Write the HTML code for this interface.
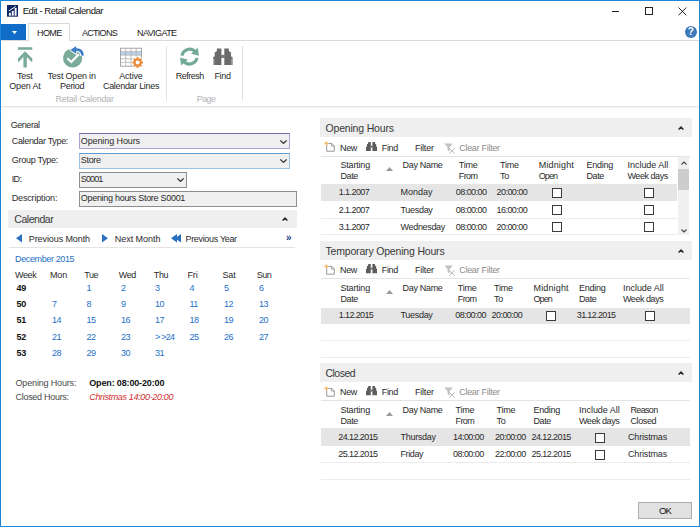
<!DOCTYPE html>
<html>
<head>
<meta charset="utf-8">
<title>Edit - Retail Calendar</title>
<style>
html,body{margin:0;padding:0;}
body{width:700px;height:527px;overflow:hidden;background:#fff;font-family:"Liberation Sans",sans-serif;font-size:9px;color:#1e1e1e;position:relative;}
#win{position:absolute;left:0;top:0;width:698px;height:525px;border:1px solid #1c86d9;background:#fff;}
.a{position:absolute;white-space:nowrap;}
.t{position:absolute;white-space:nowrap;line-height:12px;font-size:9px;letter-spacing:-0.3px;color:#2a2a2a;}
.c{text-align:center;}
.hl{position:absolute;height:1px;background:#ebebeb;}
.vl{position:absolute;width:1px;background:#e1e1e1;}
.sec{position:absolute;background:#efefef;}
.blue{color:#2470c6;}
.b{font-weight:bold;}
.cb{position:absolute;width:8px;height:8px;border:1px solid #3a3a3a;background:#fff;}
</style>
</head>
<body>
<div id="win">
<svg class="a" style="left:5.7px;top:4px" width="11.5" height="11.7" viewBox="0 0 12 12" preserveAspectRatio="none"><rect width="12" height="12" fill="#0d2560"/><rect x="2" y="8" width="2" height="3" fill="#fff"/><rect x="5" y="6" width="2" height="5" fill="#fff"/><rect x="8" y="3" width="2" height="8" fill="#fff"/><path d="M2 6 L9 1.5" stroke="#fff" stroke-width="1" fill="none"/></svg>
<div class="t " style="left:21.70px;top:4.3px;font-size:9.5px;letter-spacing:-0.45px;color:#111">Edit - Retail Calendar</div>
<div class="a" style="left:610.7px;top:10px;width:7.3px;height:1px;background:#222"></div>
<div class="a" style="left:643.7px;top:6px;width:6px;height:6px;border:1px solid #222"></div>
<svg class="a" style="left:676.7px;top:6px" width="9" height="9" viewBox="0 0 9 9"><path d="M0.5 0.5 L8.3 8.3 M8.3 0.5 L0.5 8.3" stroke="#222" stroke-width="1"/></svg>
<div class="a" style="left:0px;top:23px;width:25px;height:16px;background:#106cc6"></div>
<svg class="a" style="left:11px;top:30px" width="5" height="3.5" viewBox="0 0 5 3.5"><path d="M0 0 H5 L2.5 3.3 Z" fill="#fff"/></svg>
<div class="hl" style="left:0px;top:39px;width:698px;background:#dadada"></div>
<div class="a" style="left:27px;top:22px;width:40px;height:17px;border:1px solid #dadada;border-bottom:1px solid #fff;background:#fff"></div>
<div class="t " style="left:36.00px;top:26px;letter-spacing:-0.62px;color:#222">HOME</div>
<div class="t " style="left:81.00px;top:26px;letter-spacing:-0.72px;color:#222">ACTIONS</div>
<div class="t " style="left:136.00px;top:26px;letter-spacing:-0.59px;color:#222">NAVIGATE</div>
<div class="a" style="left:683.8px;top:25px;width:12px;height:12px;border-radius:6px;background:#3b79b9;color:#fff;font-weight:bold;font-size:10px;line-height:12px;text-align:center">?</div>
<div class="hl" style="left:0px;top:105px;width:698px;background:#e6e6e6"></div>
<div class="hl" style="left:0px;top:106px;width:698px;background:#f4f4f4"></div>
<div class="vl" style="left:165px;top:45px;height:55px;"></div>
<div class="vl" style="left:241px;top:45px;height:55px;"></div>
<div class="t " style="left:16.00px;top:69px;letter-spacing:-0.25px;">Test</div>
<div class="t " style="left:8.25px;top:79px;letter-spacing:-0.15px;">Open At</div>
<div class="t " style="left:46.47px;top:69px;letter-spacing:-0.19px;">Test Open in</div>
<div class="t " style="left:58.97px;top:79px;letter-spacing:-0.29px;">Period</div>
<div class="t " style="left:118.28px;top:69px;letter-spacing:-0.21px;">Active</div>
<div class="t " style="left:102.00px;top:79px;letter-spacing:-0.32px;">Calendar Lines</div>
<div class="t " style="left:54.47px;top:92px;letter-spacing:-0.25px;color:#b4b4b4">Retail Calendar</div>
<div class="t " style="left:174.75px;top:69px;letter-spacing:-0.50px;">Refresh</div>
<div class="t " style="left:213.38px;top:69px;letter-spacing:-0.32px;">Find</div>
<div class="t " style="left:195.72px;top:92px;letter-spacing:-0.57px;color:#b4b4b4">Page</div>
<svg class="a" style="left:16px;top:45px" width="18" height="24" viewBox="16 45 18 24"><g transform="translate(-1,-1)"><rect x="18" y="47.2" width="14.3" height="2.6" fill="#7aab98"/><path d="M25.1 51.2 L32.3 58.6 V62.6 L26.8 57 V67.4 H23.4 V57 L18 62.6 V58.6 Z" fill="#7aab98"/></g></svg>
<svg class="a" style="left:60px;top:43px" width="26" height="26" viewBox="60 43 26 26"><g transform="translate(-1,-1)"><circle cx="72.6" cy="58" r="9.6" fill="#7aab98"/><path d="M67.3 58.2 L71.3 62 L78.9 54.2" stroke="#fff" stroke-width="2.2" fill="none"/><g transform="translate(-0.8,0.8)"><path d="M83.3 55.2 C83.6 50.6 80.6 48.3 76.4 48.9" stroke="#fff" stroke-width="5" fill="none"/><path d="M70 49.2 L77.6 43.6 V54.6 Z" fill="#fff"/><path d="M83.3 54.8 C83.6 50.6 80.6 48.3 76.4 48.9" stroke="#3f7fc6" stroke-width="2.7" fill="none"/><path d="M71.3 49.2 L76.9 45.3 V53 Z" fill="#3f7fc6"/></g></g></svg>
<svg class="a" style="left:118px;top:45px" width="28" height="24" viewBox="118 45 28 24"><g transform="translate(-1,-1)"><rect x="120.5" y="48.2" width="21" height="18" fill="#fff" stroke="#9a9a9a" stroke-width="0.9"/><rect x="121" y="51.8" width="20" height="3.2" fill="#bcd3ee"/><path d="M120.5 51.6 H141.5" stroke="#a8a8a8" stroke-width="0.7"/><path d="M120.5 55.2 H141.5" stroke="#a8a8a8" stroke-width="0.7"/><path d="M120.5 58.8 H141.5" stroke="#a8a8a8" stroke-width="0.7"/><path d="M120.5 62.4 H141.5" stroke="#a8a8a8" stroke-width="0.7"/><path d="M125.7 48.2 V66.2" stroke="#a8a8a8" stroke-width="0.7"/><path d="M131 48.2 V66.2" stroke="#a8a8a8" stroke-width="0.7"/><path d="M136.2 48.2 V66.2" stroke="#a8a8a8" stroke-width="0.7"/><circle cx="137.6" cy="62.5" r="6.1" fill="#fff"/><circle cx="137.6" cy="62.5" r="3.1" fill="none" stroke="#e98a3a" stroke-width="2.2"/><path d="M141.40 62.50 L143.00 62.50" stroke="#e98a3a" stroke-width="2.1"/><path d="M140.29 65.19 L141.42 66.32" stroke="#e98a3a" stroke-width="2.1"/><path d="M137.60 66.30 L137.60 67.90" stroke="#e98a3a" stroke-width="2.1"/><path d="M134.91 65.19 L133.78 66.32" stroke="#e98a3a" stroke-width="2.1"/><path d="M133.80 62.50 L132.20 62.50" stroke="#e98a3a" stroke-width="2.1"/><path d="M134.91 59.81 L133.78 58.68" stroke="#e98a3a" stroke-width="2.1"/><path d="M137.60 58.70 L137.60 57.10" stroke="#e98a3a" stroke-width="2.1"/><path d="M140.29 59.81 L141.42 58.68" stroke="#e98a3a" stroke-width="2.1"/></g></svg>
<svg class="a" style="left:177px;top:44px" width="26" height="26" viewBox="177 44 26 26"><g transform="translate(-1,-1)" fill="none" stroke="#74ab96" stroke-width="3.1"><path d="M182.1 57.2 A7.4 7.4 0 0 1 195.4 52.2"/><path d="M196.9 56.0 A7.4 7.4 0 0 1 183.6 61.0"/></g><g transform="translate(-1,-1)"><rect x="178" y="55.7" width="24" height="2.1" fill="#fff"/><path d="M197.9 47.7 L198.9 55.7 L191.1 53.7 Z" fill="#74ab96"/><path d="M181.1 65.6 L180.1 57.8 L187.9 59.6 Z" fill="#74ab96"/></g></svg>
<svg class="a" style="left:211px;top:46px" width="24" height="20" viewBox="211 46 24 20"><g transform="translate(-1,-1)" fill="#6b6b6b"><path d="M216.9 48.4 L221.4 48.4 L221.4 64.9 L213.0 64.9 L213.0 57.4 L214.7 56.2 L214.7 52.6 L216.3 51.4 L216.9 50.5 Z"/><path d="M228.8 48.4 L224.3 48.4 L224.3 64.9 L232.7 64.9 L232.7 57.4 L231.0 56.2 L231.0 52.6 L229.4 51.4 L228.8 50.5 Z"/><rect x="221" y="54.8" width="4" height="3.2" fill="#7c7c7c"/><rect x="213" y="58.5" width="1.3" height="6.4" fill="#b4b4b4"/><rect x="231.4" y="58.5" width="1.3" height="6.4" fill="#b4b4b4"/></g></svg>
<div class="t " style="left:9.75px;top:118px;letter-spacing:-0.47px;">General</div>
<div class="t " style="left:10.75px;top:134px;letter-spacing:-0.33px;">Calendar Type:</div>
<div class="t " style="left:10.75px;top:153px;letter-spacing:-0.28px;">Group Type:</div>
<div class="t " style="left:10.75px;top:172px;letter-spacing:-0.67px;">ID:</div>
<div class="t " style="left:10.75px;top:191px;letter-spacing:-0.17px;">Description:</div>
<div class="a" style="left:77.5px;top:132px;width:209px;height:14px;border:1px solid #a9a3d6;border-top-color:#6f6aa8;background:#f0f0f0"></div>
<div class="a" style="left:77.5px;top:152px;width:209px;height:14px;border:1px solid #9cc3e6;border-top-color:#5b9fd6;background:#f0f0f0"></div>
<div class="a" style="left:77.5px;top:171px;width:106px;height:14px;border:1px solid #8e8e8e;background:#f0f0f0"></div>
<div class="a" style="left:77.5px;top:190px;width:216px;height:14px;border:1px solid #8e8e8e;background:#f0f0f0"></div>
<div class="t " style="left:79.75px;top:134px;letter-spacing:-0.10px;">Opening Hours</div>
<div class="t " style="left:79.75px;top:153px;letter-spacing:-0.30px;">Store</div>
<div class="t " style="left:79.75px;top:172px;letter-spacing:-0.86px;">S0001</div>
<div class="t " style="left:79.75px;top:191px;letter-spacing:-0.29px;">Opening hours Store S0001</div>
<svg class="a" style="left:278.5px;top:138.5px" width="7" height="4" viewBox="0 0 7 4"><path d="M0.4 0.4 L3.5 3.4 L6.6 0.4" stroke="#3a3a3a" stroke-width="1.25" fill="none"/></svg>
<svg class="a" style="left:278.5px;top:157.7px" width="7" height="4" viewBox="0 0 7 4"><path d="M0.4 0.4 L3.5 3.4 L6.6 0.4" stroke="#3a3a3a" stroke-width="1.25" fill="none"/></svg>
<svg class="a" style="left:175.5px;top:176.5px" width="7" height="4" viewBox="0 0 7 4"><path d="M0.4 0.4 L3.5 3.4 L6.6 0.4" stroke="#3a3a3a" stroke-width="1.25" fill="none"/></svg>
<div class="sec" style="left:7.25px;top:209px;width:288.5px;height:18px"></div>
<div class="t " style="left:13.25px;top:212px;font-size:10.5px;letter-spacing:-0.45px;color:#383838">Calendar</div>
<svg class="a" style="left:281.25px;top:216px" width="6" height="4" viewBox="0 0 6 4"><path d="M0.6 3.6 L3 1.1 L5.4 3.6" stroke="#2a2a2a" stroke-width="1.4" fill="none"/></svg>
<div class="sec" style="left:318.5px;top:117px;width:372.5px;height:19px"></div>
<div class="t " style="left:324.50px;top:120.5px;font-size:10.5px;letter-spacing:-0.18px;color:#383838">Opening Hours</div>
<svg class="a" style="left:676.5px;top:124.5px" width="6" height="4" viewBox="0 0 6 4"><path d="M0.6 3.6 L3 1.1 L5.4 3.6" stroke="#2a2a2a" stroke-width="1.4" fill="none"/></svg>
<div class="sec" style="left:318.5px;top:240px;width:372.5px;height:19px"></div>
<div class="t " style="left:324.50px;top:243.5px;font-size:10.5px;letter-spacing:-0.18px;color:#383838">Temporary Opening Hours</div>
<svg class="a" style="left:676.5px;top:247.5px" width="6" height="4" viewBox="0 0 6 4"><path d="M0.6 3.6 L3 1.1 L5.4 3.6" stroke="#2a2a2a" stroke-width="1.4" fill="none"/></svg>
<div class="sec" style="left:318.5px;top:362px;width:372.5px;height:19px"></div>
<div class="t " style="left:324.50px;top:365.5px;font-size:10.5px;letter-spacing:-0.53px;color:#383838">Closed</div>
<svg class="a" style="left:676.5px;top:369.5px" width="6" height="4" viewBox="0 0 6 4"><path d="M0.6 3.6 L3 1.1 L5.4 3.6" stroke="#2a2a2a" stroke-width="1.4" fill="none"/></svg>
<svg class="a" style="left:15px;top:233.25px" width="6" height="8.5" viewBox="0 0 6 8.5"><path d="M6 0 L0 4.25 L6 8.5 Z" fill="#2a6fc0"/></svg>
<div class="t " style="left:27.75px;top:231.75px;letter-spacing:-0.09px;">Previous Month</div>
<svg class="a" style="left:101px;top:233.25px" width="6" height="8.5" viewBox="0 0 6 8.5"><path d="M0 0 L6 4.25 L0 8.5 Z" fill="#2a6fc0"/></svg>
<div class="t " style="left:113.75px;top:231.75px;letter-spacing:-0.03px;">Next Month</div>
<svg class="a" style="left:170px;top:233.25px" width="6" height="8.5" viewBox="0 0 6 8.5"><path d="M6 0 L0 4.25 L6 8.5 Z" fill="#2a6fc0"/></svg>
<svg class="a" style="left:174px;top:233.25px" width="6" height="8.5" viewBox="0 0 6 8.5"><path d="M6 0 L0 4.25 L6 8.5 Z" fill="#2a6fc0"/></svg>
<div class="t " style="left:184.50px;top:231.75px;letter-spacing:-0.33px;">Previous Year</div>
<div class="t " style="left:285.00px;top:231px;color:#1c3f8c;font-weight:bold;font-size:10px;letter-spacing:0">&raquo;</div>
<div class="hl" style="left:8px;top:246px;width:286px;background:#e4e4e4"></div>
<div class="t blue" style="left:14.00px;top:251.75px;letter-spacing:-0.37px;">December 2015</div>
<div class="t " style="left:14.00px;top:268px;letter-spacing:-0.40px;">Week</div>
<div class="t " style="left:49.00px;top:268px;letter-spacing:-0.17px;">Mon</div>
<div class="t " style="left:83.25px;top:268px;letter-spacing:-0.40px;">Tue</div>
<div class="t " style="left:117.75px;top:268px;letter-spacing:-0.45px;">Wed</div>
<div class="t " style="left:152.75px;top:268px;letter-spacing:-0.34px;">Thu</div>
<div class="t " style="left:186.50px;top:268px;letter-spacing:-0.17px;">Fri</div>
<div class="t " style="left:221.50px;top:268px;letter-spacing:-0.17px;">Sat</div>
<div class="t " style="left:255.75px;top:268px;letter-spacing:-0.51px;">Sun</div>
<div class="t b" style="left:15.50px;top:280.75px;color:#111;letter-spacing:-0.2px">49</div>
<div class="t blue" style="left:85.50px;top:280.75px;letter-spacing:-0.6px">1</div>
<div class="t blue" style="left:120.00px;top:280.75px;letter-spacing:-0.6px">2</div>
<div class="t blue" style="left:154.00px;top:280.75px;letter-spacing:-0.6px">3</div>
<div class="t blue" style="left:188.50px;top:280.75px;letter-spacing:-0.6px">4</div>
<div class="t blue" style="left:223.00px;top:280.75px;letter-spacing:-0.6px">5</div>
<div class="t blue" style="left:258.00px;top:280.75px;letter-spacing:-0.6px">6</div>
<div class="t b" style="left:15.50px;top:297px;color:#111;letter-spacing:-0.2px">50</div>
<div class="t blue" style="left:51.00px;top:297px;letter-spacing:-0.6px">7</div>
<div class="t blue" style="left:85.50px;top:297px;letter-spacing:-0.6px">8</div>
<div class="t blue" style="left:120.00px;top:297px;letter-spacing:-0.6px">9</div>
<div class="t blue" style="left:154.00px;top:297px;letter-spacing:-0.6px">10</div>
<div class="t blue" style="left:188.50px;top:297px;letter-spacing:-0.6px">11</div>
<div class="t blue" style="left:223.00px;top:297px;letter-spacing:-0.6px">12</div>
<div class="t blue" style="left:258.00px;top:297px;letter-spacing:-0.6px">13</div>
<div class="t b" style="left:15.50px;top:313.25px;color:#111;letter-spacing:-0.2px">51</div>
<div class="t blue" style="left:51.00px;top:313.25px;letter-spacing:-0.6px">14</div>
<div class="t blue" style="left:85.50px;top:313.25px;letter-spacing:-0.6px">15</div>
<div class="t blue" style="left:120.00px;top:313.25px;letter-spacing:-0.6px">16</div>
<div class="t blue" style="left:154.00px;top:313.25px;letter-spacing:-0.6px">17</div>
<div class="t blue" style="left:188.50px;top:313.25px;letter-spacing:-0.6px">18</div>
<div class="t blue" style="left:223.00px;top:313.25px;letter-spacing:-0.6px">19</div>
<div class="t blue" style="left:258.00px;top:313.25px;letter-spacing:-0.6px">20</div>
<div class="t b" style="left:15.50px;top:329.5px;color:#111;letter-spacing:-0.2px">52</div>
<div class="t blue" style="left:51.00px;top:329.5px;letter-spacing:-0.6px">21</div>
<div class="t blue" style="left:85.50px;top:329.5px;letter-spacing:-0.6px">22</div>
<div class="t blue" style="left:120.00px;top:329.5px;letter-spacing:-0.6px">23</div>
<div class="t blue" style="left:154.00px;top:329.5px;letter-spacing:-0.75px">&gt; &gt;24</div>
<div class="t blue" style="left:188.50px;top:329.5px;letter-spacing:-0.6px">25</div>
<div class="t blue" style="left:223.00px;top:329.5px;letter-spacing:-0.6px">26</div>
<div class="t blue" style="left:258.00px;top:329.5px;letter-spacing:-0.6px">27</div>
<div class="t b" style="left:15.50px;top:345.75px;color:#111;letter-spacing:-0.2px">53</div>
<div class="t blue" style="left:51.00px;top:345.75px;letter-spacing:-0.6px">28</div>
<div class="t blue" style="left:85.50px;top:345.75px;letter-spacing:-0.6px">29</div>
<div class="t blue" style="left:120.00px;top:345.75px;letter-spacing:-0.6px">30</div>
<div class="t blue" style="left:154.00px;top:345.75px;letter-spacing:-0.6px">31</div>
<div class="t " style="left:14.50px;top:376px;letter-spacing:-0.16px;color:#4a4a4a">Opening Hours:</div>
<div class="t b" style="left:88.25px;top:376px;letter-spacing:-0.15px;color:#111">Open: 08:00-20:00</div>
<div class="t " style="left:14.50px;top:389.75px;letter-spacing:-0.29px;color:#4a4a4a">Closed Hours:</div>
<div class="t " style="left:88.25px;top:389.75px;letter-spacing:-0.34px;color:#d03030;font-style:italic">Christmas 14:00-20:00</div>
<svg class="a" style="left:323px;top:140px" width="12" height="12" viewBox="0 0 12 12"><path d="M2.7 2.4 H7.8 L10.3 4.9 V10.2 H2.7 Z" fill="#fff" stroke="#8c8c8c" stroke-width="0.9"/><path d="M7.6 2.6 V5.1 H10.1" fill="none" stroke="#8c8c8c" stroke-width="0.8"/><path d="M2.4 0.2 L3.1 1.8 L4.7 2.4 L3.1 3.1 L2.4 4.7 L1.7 3.1 L0.1 2.4 L1.7 1.8 Z" fill="#f1b95c" stroke="#f3c67a" stroke-width="0.6"/></svg>
<div class="t " style="left:339.00px;top:140.5px;letter-spacing:-0.34px;">New</div>
<svg class="a" style="left:365px;top:140.9px" width="11.2" height="9.3" viewBox="213 48.4 19.7 16.5" preserveAspectRatio="none"><g fill="#5c5c5c"><path d="M216.9 48.4 L221.4 48.4 L221.4 64.9 L213.0 64.9 L213.0 57.4 L214.7 56.2 L214.7 52.6 L216.3 51.4 L216.9 50.5 Z"/><path d="M228.8 48.4 L224.3 48.4 L224.3 64.9 L232.7 64.9 L232.7 57.4 L231.0 56.2 L231.0 52.6 L229.4 51.4 L228.8 50.5 Z"/><rect x="221" y="54.8" width="4" height="3.6" fill="#6c6c6c"/></g></svg>
<div class="t " style="left:380.75px;top:140.5px;letter-spacing:-0.32px;">Find</div>
<div class="t " style="left:414.00px;top:140.5px;letter-spacing:-0.21px;">Filter</div>
<svg class="a" style="left:443px;top:140.5px" width="12" height="12" viewBox="0 0 12 12"><path d="M0.3 1.6 H8.8 L5.6 5.2 V9.4 L3.6 8.2 V5.2 Z" fill="#c2c2c2"/><path d="M5.2 6.4 L10.6 11.6 M10.6 6.4 L5.2 11.6" stroke="#b8b8b8" stroke-width="1"/></svg>
<div class="t " style="left:458.20px;top:140.5px;letter-spacing:-0.28px;color:#8c8c8c">Clear Filter</div>
<svg class="a" style="left:323px;top:262.5px" width="12" height="12" viewBox="0 0 12 12"><path d="M2.7 2.4 H7.8 L10.3 4.9 V10.2 H2.7 Z" fill="#fff" stroke="#8c8c8c" stroke-width="0.9"/><path d="M7.6 2.6 V5.1 H10.1" fill="none" stroke="#8c8c8c" stroke-width="0.8"/><path d="M2.4 0.2 L3.1 1.8 L4.7 2.4 L3.1 3.1 L2.4 4.7 L1.7 3.1 L0.1 2.4 L1.7 1.8 Z" fill="#f1b95c" stroke="#f3c67a" stroke-width="0.6"/></svg>
<div class="t " style="left:339.00px;top:263px;letter-spacing:-0.34px;">New</div>
<svg class="a" style="left:365px;top:263.4px" width="11.2" height="9.3" viewBox="213 48.4 19.7 16.5" preserveAspectRatio="none"><g fill="#5c5c5c"><path d="M216.9 48.4 L221.4 48.4 L221.4 64.9 L213.0 64.9 L213.0 57.4 L214.7 56.2 L214.7 52.6 L216.3 51.4 L216.9 50.5 Z"/><path d="M228.8 48.4 L224.3 48.4 L224.3 64.9 L232.7 64.9 L232.7 57.4 L231.0 56.2 L231.0 52.6 L229.4 51.4 L228.8 50.5 Z"/><rect x="221" y="54.8" width="4" height="3.6" fill="#6c6c6c"/></g></svg>
<div class="t " style="left:380.75px;top:263px;letter-spacing:-0.32px;">Find</div>
<div class="t " style="left:414.00px;top:263px;letter-spacing:-0.21px;">Filter</div>
<svg class="a" style="left:443px;top:263px" width="12" height="12" viewBox="0 0 12 12"><path d="M0.3 1.6 H8.8 L5.6 5.2 V9.4 L3.6 8.2 V5.2 Z" fill="#c2c2c2"/><path d="M5.2 6.4 L10.6 11.6 M10.6 6.4 L5.2 11.6" stroke="#b8b8b8" stroke-width="1"/></svg>
<div class="t " style="left:458.20px;top:263px;letter-spacing:-0.28px;color:#8c8c8c">Clear Filter</div>
<svg class="a" style="left:323px;top:384.5px" width="12" height="12" viewBox="0 0 12 12"><path d="M2.7 2.4 H7.8 L10.3 4.9 V10.2 H2.7 Z" fill="#fff" stroke="#8c8c8c" stroke-width="0.9"/><path d="M7.6 2.6 V5.1 H10.1" fill="none" stroke="#8c8c8c" stroke-width="0.8"/><path d="M2.4 0.2 L3.1 1.8 L4.7 2.4 L3.1 3.1 L2.4 4.7 L1.7 3.1 L0.1 2.4 L1.7 1.8 Z" fill="#f1b95c" stroke="#f3c67a" stroke-width="0.6"/></svg>
<div class="t " style="left:339.00px;top:385px;letter-spacing:-0.34px;">New</div>
<svg class="a" style="left:365px;top:385.4px" width="11.2" height="9.3" viewBox="213 48.4 19.7 16.5" preserveAspectRatio="none"><g fill="#5c5c5c"><path d="M216.9 48.4 L221.4 48.4 L221.4 64.9 L213.0 64.9 L213.0 57.4 L214.7 56.2 L214.7 52.6 L216.3 51.4 L216.9 50.5 Z"/><path d="M228.8 48.4 L224.3 48.4 L224.3 64.9 L232.7 64.9 L232.7 57.4 L231.0 56.2 L231.0 52.6 L229.4 51.4 L228.8 50.5 Z"/><rect x="221" y="54.8" width="4" height="3.6" fill="#6c6c6c"/></g></svg>
<div class="t " style="left:380.75px;top:385px;letter-spacing:-0.32px;">Find</div>
<div class="t " style="left:414.00px;top:385px;letter-spacing:-0.21px;">Filter</div>
<svg class="a" style="left:443px;top:385px" width="12" height="12" viewBox="0 0 12 12"><path d="M0.3 1.6 H8.8 L5.6 5.2 V9.4 L3.6 8.2 V5.2 Z" fill="#c2c2c2"/><path d="M5.2 6.4 L10.6 11.6 M10.6 6.4 L5.2 11.6" stroke="#b8b8b8" stroke-width="1"/></svg>
<div class="t " style="left:458.20px;top:385px;letter-spacing:-0.28px;color:#8c8c8c">Clear Filter</div>
<div class="hl" style="left:319.5px;top:155px;width:369px;background:#e4e4e4"></div>
<div class="t " style="left:339.50px;top:158px;letter-spacing:-0.19px;">Starting</div>
<div class="t " style="left:339.50px;top:169.25px;letter-spacing:-0.38px;">Date</div>
<div class="t " style="left:401.50px;top:158px;letter-spacing:-0.31px;">Day Name</div>
<div class="t " style="left:457.75px;top:158px;letter-spacing:-0.23px;">Time</div>
<div class="t " style="left:457.75px;top:169.25px;letter-spacing:-0.56px;">From</div>
<div class="t " style="left:499.00px;top:158px;letter-spacing:-0.23px;">Time</div>
<div class="t " style="left:499.00px;top:169.25px;">To</div>
<div class="t " style="left:537.75px;top:158px;letter-spacing:0.15px;">Midnight</div>
<div class="t " style="left:537.75px;top:169.25px;letter-spacing:-0.90px;">Open</div>
<div class="t " style="left:585.50px;top:158px;letter-spacing:-0.26px;">Ending</div>
<div class="t " style="left:585.50px;top:169.25px;letter-spacing:-0.38px;">Date</div>
<div class="t " style="left:626.50px;top:158px;letter-spacing:-0.03px;">Include All</div>
<div class="t " style="left:626.50px;top:169.25px;letter-spacing:-0.46px;">Week days</div>
<svg class="a" style="left:384.75px;top:166.4px" width="7" height="4" viewBox="0 0 7 4"><path d="M0 4 L3.5 0 L7 4 Z" fill="#9a9a9a"/></svg>
<div class="a" style="left:319.5px;top:183px;width:356.5px;height:16.5px;background:#e5e5e5"></div>
<div class="hl" style="left:319.5px;top:217px;width:356.5px;"></div>
<div class="hl" style="left:319.5px;top:233px;width:356.5px;"></div>
<div class="t " style="left:337.75px;top:185px;letter-spacing:-0.57px;">1.1.2007</div>
<div class="t " style="left:399.50px;top:185px;letter-spacing:-0.01px;">Monday</div>
<div class="t " style="left:454.75px;top:185px;letter-spacing:-0.54px;">08:00:00</div>
<div class="t " style="left:495.50px;top:185px;letter-spacing:-0.54px;">20:00:00</div>
<div class="t " style="left:337.75px;top:202.5px;letter-spacing:-0.57px;">2.1.2007</div>
<div class="t " style="left:399.50px;top:202.5px;letter-spacing:-0.31px;">Tuesday</div>
<div class="t " style="left:454.75px;top:202.5px;letter-spacing:-0.54px;">08:00:00</div>
<div class="t " style="left:495.50px;top:202.5px;letter-spacing:-0.54px;">16:00:00</div>
<div class="t " style="left:337.75px;top:219.5px;letter-spacing:-0.57px;">3.1.2007</div>
<div class="t " style="left:399.50px;top:219.5px;letter-spacing:-0.32px;">Wednesday</div>
<div class="t " style="left:454.75px;top:219.5px;letter-spacing:-0.54px;">08:00:00</div>
<div class="t " style="left:495.50px;top:219.5px;letter-spacing:-0.54px;">20:00:00</div>
<div class="cb" style="left:551px;top:187px"></div>
<div class="cb" style="left:643.25px;top:187px"></div>
<div class="cb" style="left:551px;top:203.75px"></div>
<div class="cb" style="left:643.25px;top:203.75px"></div>
<div class="cb" style="left:551px;top:221.25px"></div>
<div class="cb" style="left:643.25px;top:221.25px"></div>
<div class="a" style="left:677px;top:156px;width:11px;height:77.5px;background:#f0f0f0"></div>
<div class="a" style="left:677px;top:168.25px;width:11px;height:20.25px;background:#cdcdcd"></div>
<svg class="a" style="left:679.5px;top:160px" width="6" height="4" viewBox="0 0 6 4"><path d="M0.5 3.5 L3 1 L5.5 3.5" stroke="#444" stroke-width="1.1" fill="none"/></svg>
<svg class="a" style="left:679.5px;top:227.5px" width="6" height="4" viewBox="0 0 6 4"><path d="M0.5 0.5 L3 3 L5.5 0.5" stroke="#444" stroke-width="1.1" fill="none"/></svg>
<div class="hl" style="left:319.5px;top:277px;width:369px;background:#e4e4e4"></div>
<div class="t " style="left:339.50px;top:281.25px;letter-spacing:-0.19px;">Starting</div>
<div class="t " style="left:339.50px;top:291.75px;letter-spacing:-0.38px;">Date</div>
<div class="t " style="left:401.50px;top:281.25px;letter-spacing:-0.31px;">Day Name</div>
<div class="t " style="left:456.75px;top:281.25px;letter-spacing:-0.23px;">Time</div>
<div class="t " style="left:456.75px;top:291.75px;letter-spacing:-0.56px;">From</div>
<div class="t " style="left:493.00px;top:281.25px;letter-spacing:-0.23px;">Time</div>
<div class="t " style="left:493.00px;top:291.75px;">To</div>
<div class="t " style="left:532.50px;top:281.25px;letter-spacing:0.15px;">Midnight</div>
<div class="t " style="left:532.50px;top:291.75px;letter-spacing:-0.90px;">Open</div>
<div class="t " style="left:578.00px;top:281.25px;letter-spacing:-0.26px;">Ending</div>
<div class="t " style="left:578.00px;top:291.75px;letter-spacing:-0.38px;">Date</div>
<div class="t " style="left:622.00px;top:281.25px;letter-spacing:-0.03px;">Include All</div>
<div class="t " style="left:622.00px;top:291.75px;letter-spacing:-0.46px;">Week days</div>
<svg class="a" style="left:384.75px;top:288.75px" width="7" height="4" viewBox="0 0 7 4"><path d="M0 4 L3.5 0 L7 4 Z" fill="#9a9a9a"/></svg>
<div class="a" style="left:319.5px;top:306.5px;width:369px;height:16.25px;background:#e5e5e5"></div>
<div class="hl" style="left:319.5px;top:339px;width:369px;"></div>
<div class="hl" style="left:319.5px;top:356px;width:369px;"></div>
<div class="t " style="left:337.75px;top:308px;letter-spacing:-0.62px;">1.12.2015</div>
<div class="t " style="left:399.50px;top:308px;letter-spacing:-0.31px;">Tuesday</div>
<div class="t " style="left:454.25px;top:308px;letter-spacing:-0.54px;">08:00:00</div>
<div class="t " style="left:490.50px;top:308px;letter-spacing:-0.54px;">20:00:00</div>
<div class="t " style="left:575.75px;top:308px;letter-spacing:-0.63px;">31.12.2015</div>
<div class="cb" style="left:545.25px;top:310px"></div>
<div class="cb" style="left:644px;top:310px"></div>
<div class="hl" style="left:319.5px;top:399px;width:369px;background:#e4e4e4"></div>
<div class="t " style="left:339.50px;top:403px;letter-spacing:-0.19px;">Starting</div>
<div class="t " style="left:339.50px;top:413.75px;letter-spacing:-0.38px;">Date</div>
<div class="t " style="left:401.50px;top:403px;letter-spacing:-0.31px;">Day Name</div>
<div class="t " style="left:454.50px;top:403px;letter-spacing:-0.23px;">Time</div>
<div class="t " style="left:454.50px;top:413.75px;letter-spacing:-0.56px;">From</div>
<div class="t " style="left:495.50px;top:403px;letter-spacing:-0.23px;">Time</div>
<div class="t " style="left:495.50px;top:413.75px;">To</div>
<div class="t " style="left:532.50px;top:403px;letter-spacing:-0.26px;">Ending</div>
<div class="t " style="left:532.50px;top:413.75px;letter-spacing:-0.38px;">Date</div>
<div class="t " style="left:578.00px;top:403px;letter-spacing:-0.03px;">Include All</div>
<div class="t " style="left:578.00px;top:413.75px;letter-spacing:-0.46px;">Week days</div>
<div class="t " style="left:629.50px;top:403px;letter-spacing:-0.67px;">Reason</div>
<div class="t " style="left:629.50px;top:413.75px;letter-spacing:-0.38px;">Closed</div>
<svg class="a" style="left:384.75px;top:411.4px" width="7" height="4" viewBox="0 0 7 4"><path d="M0 4 L3.5 0 L7 4 Z" fill="#9a9a9a"/></svg>
<div class="a" style="left:319.5px;top:427px;width:369px;height:17.5px;background:#e5e5e5"></div>
<div class="hl" style="left:319.5px;top:461px;width:369px;"></div>
<div class="hl" style="left:319.5px;top:478px;width:369px;"></div>
<div class="t " style="left:337.25px;top:430px;letter-spacing:-0.58px;">24.12.2015</div>
<div class="t " style="left:399.50px;top:430px;letter-spacing:-0.29px;">Thursday</div>
<div class="t " style="left:452.00px;top:430px;letter-spacing:-0.54px;">14:00:00</div>
<div class="t " style="left:494.00px;top:430px;letter-spacing:-0.54px;">20:00:00</div>
<div class="t " style="left:530.50px;top:430px;letter-spacing:-0.58px;">24.12.2015</div>
<div class="t " style="left:627.00px;top:430px;letter-spacing:-0.17px;">Christmas</div>
<div class="t " style="left:337.25px;top:446.75px;letter-spacing:-0.58px;">25.12.2015</div>
<div class="t " style="left:399.50px;top:446.75px;letter-spacing:-0.38px;">Friday</div>
<div class="t " style="left:452.00px;top:446.75px;letter-spacing:-0.54px;">08:00:00</div>
<div class="t " style="left:494.00px;top:446.75px;letter-spacing:-0.54px;">22:00:00</div>
<div class="t " style="left:530.50px;top:446.75px;letter-spacing:-0.58px;">25.12.2015</div>
<div class="t " style="left:627.00px;top:446.75px;letter-spacing:-0.17px;">Christmas</div>
<div class="cb" style="left:594px;top:432px"></div>
<div class="cb" style="left:594px;top:448.75px"></div>
<div class="a" style="left:637px;top:501px;width:52px;height:15px;border:1px solid #adadad;background:#e1e1e1"></div>
<div class="t " style="left:658.03px;top:503.5px;font-size:9.5px;letter-spacing:-0.90px;color:#111">OK</div>
</div>
</body>
</html>
